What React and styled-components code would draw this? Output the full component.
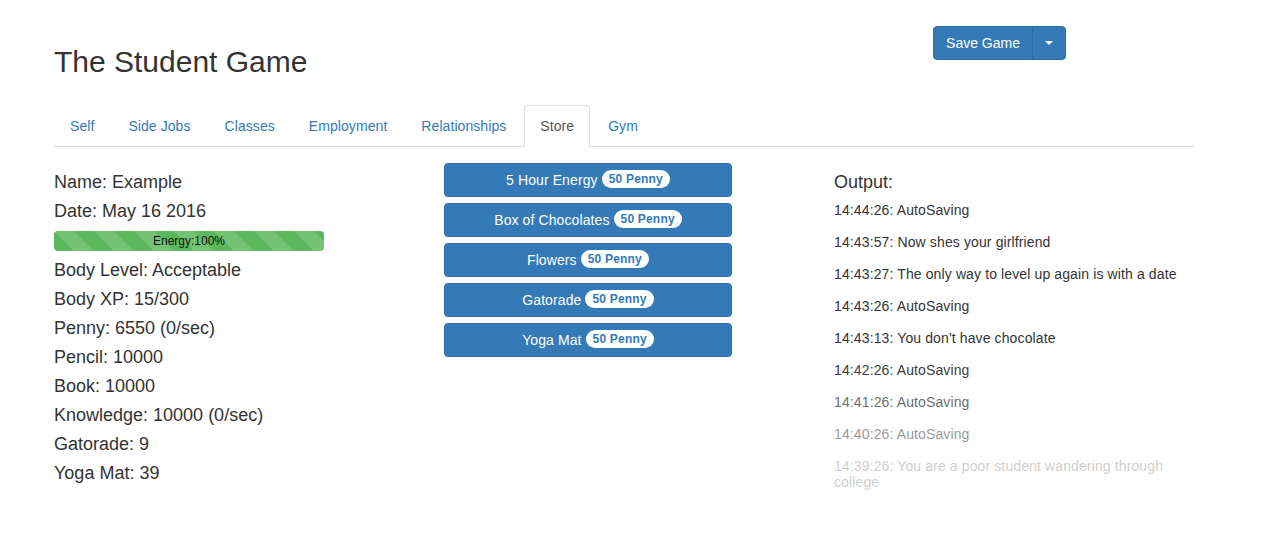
import React from "react";
import styled, { createGlobalStyle } from "styled-components";

const Global = createGlobalStyle`
  html, body { margin: 0; padding: 0; background: #fff; }
  body {
    font-family: "Liberation Sans", Arial, Helvetica, sans-serif;
    font-size: 14px;
    line-height: 20px;
    color: #333;
  }
  * { box-sizing: border-box; }
`;

const Page = styled.div`
  padding: 0 67px 0 54px;
`;

const Header = styled.div`
  display: flex;
  align-items: flex-start;
`;

const Title = styled.h2`
  margin: 45px 0 0;
  font-size: 30px;
  line-height: 33px;
  font-weight: 500;
  color: #333;
`;

const BtnGroup = styled.div`
  display: flex;
  margin: 26px 128px 0 auto;
`;

const PrimaryBtn = styled.button`
  font-family: inherit;
  font-size: 14px;
  line-height: 20px;
  height: 34px;
  padding: 6px 12px;
  color: #fff;
  background: #337ab7;
  border: 1px solid #2e6da4;
  border-radius: ${(p) => (p.$split ? "0 4px 4px 0" : "4px 0 0 4px")};
  margin-left: ${(p) => (p.$split ? "-1px" : "0")};
  display: flex;
  align-items: center;
  cursor: pointer;
`;

const Caret = styled.span`
  display: inline-block;
  width: 0;
  height: 0;
  border-top: 4px solid #fff;
  border-left: 4px solid transparent;
  border-right: 4px solid transparent;
`;

const Tabs = styled.ul`
  list-style: none;
  margin: 27px 0 0;
  padding: 0;
  display: flex;
  border-bottom: 1px solid #ddd;
`;

const Tab = styled.li`
  margin-bottom: -1px;
  margin-right: 2px;
`;

const TabLink = styled.a`
  display: block;
  padding: 10px 15px;
  line-height: 20px;
  font-size: 14px;
  letter-spacing: 0.07px;
  border: 1px solid ${(p) => (p.$active ? "#ddd" : "transparent")};
  border-bottom-color: transparent;
  border-radius: 4px 4px 0 0;
  background: ${(p) => (p.$active ? "#fff" : "transparent")};
  color: ${(p) => (p.$active ? "#555" : "#337ab7")};
  text-decoration: none;
  cursor: pointer;
`;

const Content = styled.div`
  display: grid;
  grid-template-columns: repeat(3, 360px);
  column-gap: 30px;
  margin-top: 16px;
  align-items: start;
`;

const StatsCol = styled.div`
  padding-top: 5px;
`;

const Stat = styled.div`
  font-size: 18px;
  line-height: 29px;
  height: 29px;
  white-space: nowrap;
`;

const Progress = styled.div`
  width: 270px;
  height: 20px;
  margin: 5px 0 5px;
  border-radius: 4px;
  overflow: hidden;
  background: #f5f5f5;
`;

const ProgressBar = styled.div`
  height: 100%;
  background-color: #5cb85c;
  background-image: linear-gradient(
    45deg,
    rgba(255, 255, 255, 0.15) 25%,
    transparent 25%,
    transparent 50%,
    rgba(255, 255, 255, 0.15) 50%,
    rgba(255, 255, 255, 0.15) 75%,
    transparent 75%,
    transparent
  );
  background-size: 40px 40px;
  color: #111;
  font-size: 12px;
  line-height: 20px;
  text-align: center;
`;

const StoreCol = styled.div`
  display: flex;
  flex-direction: column;
  gap: 6px;
`;

const StoreBtn = styled.button`
  width: 288px;
  height: 34px;
  padding: 6px 12px;
  font-family: inherit;
  font-size: 14px;
  line-height: 20px;
  letter-spacing: 0.1px;
  color: #fff;
  background: #337ab7;
  border: 1px solid #2e6da4;
  border-radius: 4px;
  display: flex;
  align-items: center;
  justify-content: center;
  cursor: pointer;
`;

const Badge = styled.span`
  display: inline-block;
  margin-left: 4px;
  padding: 3px 7px;
  font-size: 12px;
  font-weight: 700;
  line-height: 12px;
  letter-spacing: 0.2px;
  color: #337ab7;
  background: #fff;
  border-radius: 10px;
  position: relative;
  top: -1px;
`;

const OutputCol = styled.div`
  padding-top: 5px;
`;

const OutputTitle = styled.div`
  font-size: 18px;
  line-height: 29px;
  margin-bottom: 5px;
`;

const LogLine = styled.p`
  margin: 0 0 16px;
  font-size: 14px;
  line-height: 16px;
  letter-spacing: 0.12px;
  color: #333;
  opacity: ${(p) => p.$fade};
`;

const tabs = ["Self", "Side Jobs", "Classes", "Employment", "Relationships", "Store", "Gym"];

const stats1 = ["Name: Example", "Date: May 16 2016"];
const stats2 = [
  "Body Level: Acceptable",
  "Body XP: 15/300",
  "Penny: 6550 (0/sec)",
  "Pencil: 10000",
  "Book: 10000",
  "Knowledge: 10000 (0/sec)",
  "Gatorade: 9",
  "Yoga Mat: 39",
];

const items = ["5 Hour Energy", "Box of Chocolates", "Flowers", "Gatorade", "Yoga Mat"];

const log = [
  ["14:44:26: AutoSaving", 1],
  ["14:43:57: Now shes your girlfriend", 1],
  ["14:43:27: The only way to level up again is with a date", 1],
  ["14:43:26: AutoSaving", 1],
  ["14:43:13: You don't have chocolate", 1],
  ["14:42:26: AutoSaving", 0.95],
  ["14:41:26: AutoSaving", 0.72],
  ["14:40:26: AutoSaving", 0.5],
  ["14:39:26: You are a poor student wandering through college", 0.24],
];

export default function App() {
  return (
    <>
      <Global />
      <Page>
        <Header>
          <Title>The Student Game</Title>
          <BtnGroup>
            <PrimaryBtn>Save Game</PrimaryBtn>
            <PrimaryBtn $split aria-label="More">
              <Caret />
            </PrimaryBtn>
          </BtnGroup>
        </Header>
        <Tabs>
          {tabs.map((t) => (
            <Tab key={t}>
              <TabLink $active={t === "Store"}>{t}</TabLink>
            </Tab>
          ))}
        </Tabs>
        <Content>
          <StatsCol>
            {stats1.map((s) => (
              <Stat key={s}>{s}</Stat>
            ))}
            <Progress>
              <ProgressBar style={{ width: "100%" }}>Energy:100%</ProgressBar>
            </Progress>
            {stats2.map((s) => (
              <Stat key={s}>{s}</Stat>
            ))}
          </StatsCol>
          <StoreCol>
            {items.map((i) => (
              <StoreBtn key={i}>
                {i}
                <Badge>50 Penny</Badge>
              </StoreBtn>
            ))}
          </StoreCol>
          <OutputCol>
            <OutputTitle>Output:</OutputTitle>
            {log.map(([t, f]) => (
              <LogLine key={t} $fade={f}>
                {t}
              </LogLine>
            ))}
          </OutputCol>
        </Content>
      </Page>
    </>
  );
}
